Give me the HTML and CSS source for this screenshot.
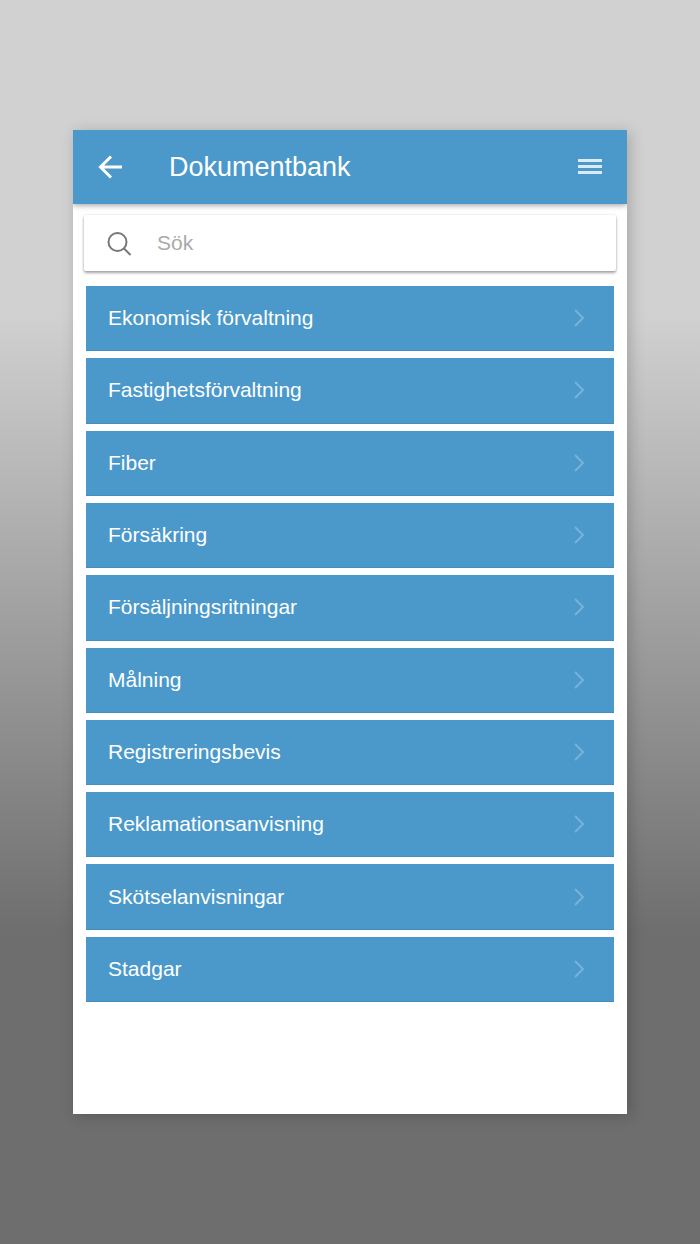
FILE: index.html
```
<!DOCTYPE html>
<html lang="sv">
<head>
  <meta charset="UTF-8" />
  <meta name="viewport" content="width=device-width, initial-scale=1.0"/>
  <title>Dokumentbank</title>
  <link rel="stylesheet" href="styles.css">
</head>
<body>
  <main class="screen">
    <header class="toolbar">
      <button class="icon-button" type="button" aria-label="Tillbaka">
        <svg class="icon" viewBox="0 0 26 26"><path d="M14 2.500L3.500 13l10.500 10.500M3.500 13h21.500"/></svg>
      </button>
      <h1 class="title">Dokumentbank</h1>
      <button class="icon-button menu-button" type="button" aria-label="Meny">
        <svg class="icon" viewBox="0 0 26 26"><path d="M1 6.500h24M1 12.500h24M1 18.500h24"/></svg>
      </button>
    </header>

    <div class="searchbar">
      <label for="search" aria-label="Sök">
        <svg class="search-icon" viewBox="0 0 26 26"><circle cx="10.500" cy="12" r="9"/><path d="M16.500 18l7 7"/></svg>
      </label>
      <input id="search" type="search" placeholder="Sök">
    </div>

    <nav class="list">
      <a class="item" href="#">Ekonomisk förvaltning <svg class="chevron" viewBox="0 0 12 20"><path d="M2 2l8 8-8 8"/></svg></a>
      <a class="item" href="#">Fastighetsförvaltning <svg class="chevron" viewBox="0 0 12 20"><path d="M2 2l8 8-8 8"/></svg></a>
      <a class="item" href="#">Fiber <svg class="chevron" viewBox="0 0 12 20"><path d="M2 2l8 8-8 8"/></svg></a>
      <a class="item" href="#">Försäkring <svg class="chevron" viewBox="0 0 12 20"><path d="M2 2l8 8-8 8"/></svg></a>
      <a class="item" href="#">Försäljningsritningar <svg class="chevron" viewBox="0 0 12 20"><path d="M2 2l8 8-8 8"/></svg></a>
      <a class="item" href="#">Målning <svg class="chevron" viewBox="0 0 12 20"><path d="M2 2l8 8-8 8"/></svg></a>
      <a class="item" href="#">Registreringsbevis <svg class="chevron" viewBox="0 0 12 20"><path d="M2 2l8 8-8 8"/></svg></a>
      <a class="item" href="#">Reklamationsanvisning <svg class="chevron" viewBox="0 0 12 20"><path d="M2 2l8 8-8 8"/></svg></a>
      <a class="item" href="#">Skötselanvisningar <svg class="chevron" viewBox="0 0 12 20"><path d="M2 2l8 8-8 8"/></svg></a>
      <a class="item" href="#">Stadgar <svg class="chevron" viewBox="0 0 12 20"><path d="M2 2l8 8-8 8"/></svg></a>
    </nav>
  </main>
</body>
</html>
```
FILE: styles.css
```
* { box-sizing: border-box; }
body {
  display: flex;
  min-height: 100vh;
  margin: 0;
  padding: 130px 73px;
  font-family: "Liberation Sans", Arial, sans-serif;
  background: linear-gradient(#d1d1d1 25%, #6e6e6e 75%);
}
.screen {
  flex: 1;
  display: flex;
  flex-direction: column;
  overflow: hidden;
  background-color: #fff;
  box-shadow: 3px 2px 14px rgba(0, 0, 0, 0.2);
}

/* Toolbar */
.toolbar {
  display: flex;
  align-items: center;
  height: 74px;
  padding: 0 24px;
  background-color: #4b99cb;
  color: #fff;
  box-shadow: 0 1px 6px rgba(0, 0, 0, 0.4);
}
.title { flex: 1; margin: 0 0 0 46px; font-size: 27px; font-weight: normal; line-height: 32px; }
.icon-button { display: flex; padding: 0; border: none; background: none; color: inherit; cursor: pointer; }
.icon { width: 26px; height: 26px; fill: none; stroke: currentColor; stroke-width: 3; }
.menu-button { opacity: 0.8; }

/* Search */
.searchbar {
  display: flex;
  align-items: center;
  height: 56px;
  margin: 11px 11px 0;
  padding: 0 23px;
  border-radius: 2px;
  background-color: #fff;
  box-shadow: 0 2px 3px rgba(0, 0, 0, 0.35), 0 0 3px rgba(0, 0, 0, 0.1);
}
.searchbar label { display: flex; }
.search-icon { width: 26px; height: 26px; fill: none; stroke: #777; stroke-width: 2; }
.searchbar input {
  flex: 1;
  min-width: 0;
  margin-left: 24px;
  padding: 0;
  border: none;
  outline: none;
  background: none;
  font: 21px/26px "Liberation Sans", Arial, sans-serif;
}
.searchbar input::placeholder { color: #aaa; }

/* Document folders */
.list {
  flex: 1;
  display: grid;
  grid-auto-rows: 1fr;
  gap: 7px;
  padding: 15px 13px 112px;
}
.item {
  display: flex;
  align-items: center;
  justify-content: space-between;
  padding: 0 29px 0 22px;
  border-bottom: 1px solid #438dbf;
  background-color: #4b99cb;
  color: #fff;
  font-size: 21px;
  line-height: 26px;
  text-decoration: none;
}
.chevron { width: 12px; height: 20px; fill: none; stroke: #78b2d8; stroke-width: 2; }
```
